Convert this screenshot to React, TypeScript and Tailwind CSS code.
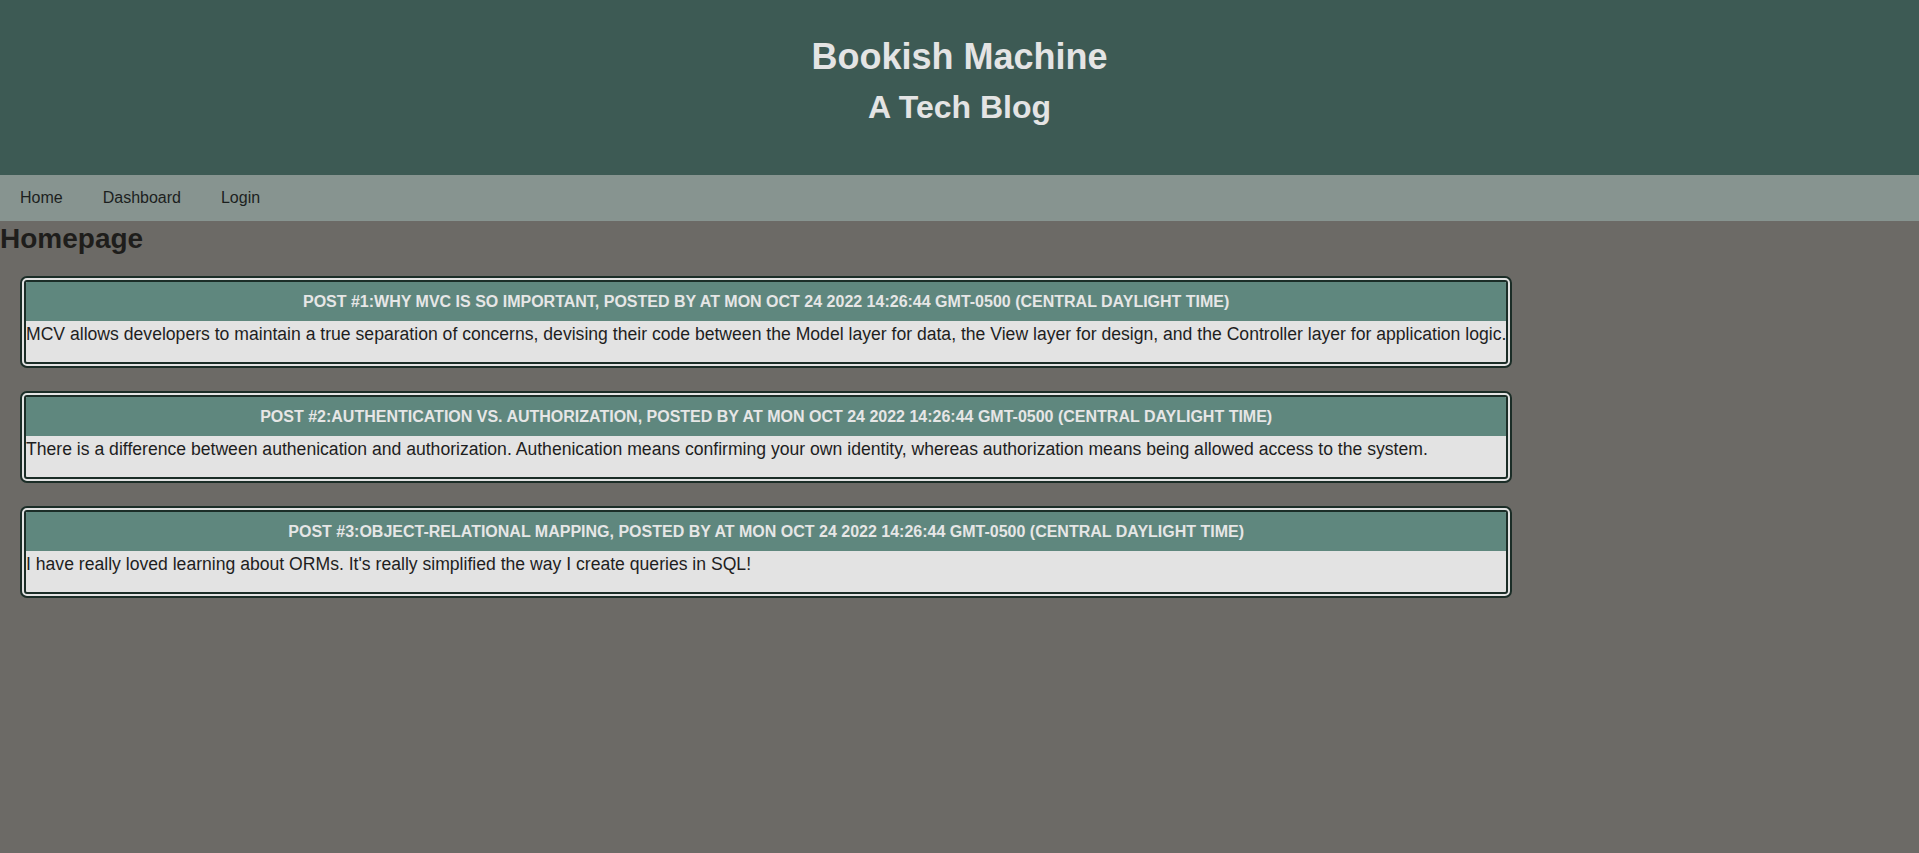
const posts = [
  {
    id: 1,
    title: "Why MVC is so important",
    body:
      "MCV allows developers to maintain a true separation of concerns, devising their code between the Model layer for data, the View layer for design, and the Controller layer for application logic.",
  },
  {
    id: 2,
    title: "Authentication vs. Authorization",
    body:
      "There is a difference between authenication and authorization. Authenication means confirming your own identity, whereas authorization means being allowed access to the system.",
  },
  {
    id: 3,
    title: "Object-Relational Mapping",
    body:
      "I have really loved learning about ORMs. It's really simplified the way I create queries in SQL!",
  },
];

const date = "Mon Oct 24 2022 14:26:44 GMT-0500 (Central Daylight Time)";

export default function App() {
  return (
    <div className="min-h-[853px] bg-[#6c6a66] font-['Liberation_Sans',Arial,sans-serif]">
      <header className="h-[175px] bg-[#3d5a54] pt-[36px] text-center text-[#e4e4e4]">
        <h1 className="text-[36px] font-bold leading-[41px]">Bookish Machine</h1>
        <h2 className="mt-[12px] text-[32px] font-bold leading-[37px]">A Tech Blog</h2>
      </header>
      <nav className="flex h-[46px] items-center bg-[#879490] text-[16px] text-[#1c1f1e]">
        <a className="px-5" href="#">Home</a>
        <a className="px-5" href="#">Dashboard</a>
        <a className="px-5" href="#">Login</a>
      </nav>
      <h2 className="mt-[2px] text-[28px] font-bold leading-[32px] text-[#1e1d1b]">Homepage</h2>
      <div className="ml-5 mt-[21px] flex w-fit flex-col gap-[23px]">
        {posts.map((p) => (
          <div
            key={p.id}
            className="overflow-hidden rounded-[7px] border-[6px] border-double border-[#1b2d27] bg-[#e3e3e3]"
          >
            <div className="bg-[#5f877e] py-[10px] text-center text-[16px] font-bold uppercase leading-[19px] text-[#e6e6e6]">
              Post #{p.id}:{p.title}, posted by at {date}
            </div>
            <p className="pb-[17px] pt-[3px] text-[17.6px] leading-[21px] text-[#1e1e1e]">{p.body}</p>
          </div>
        ))}
      </div>
    </div>
  );
}
